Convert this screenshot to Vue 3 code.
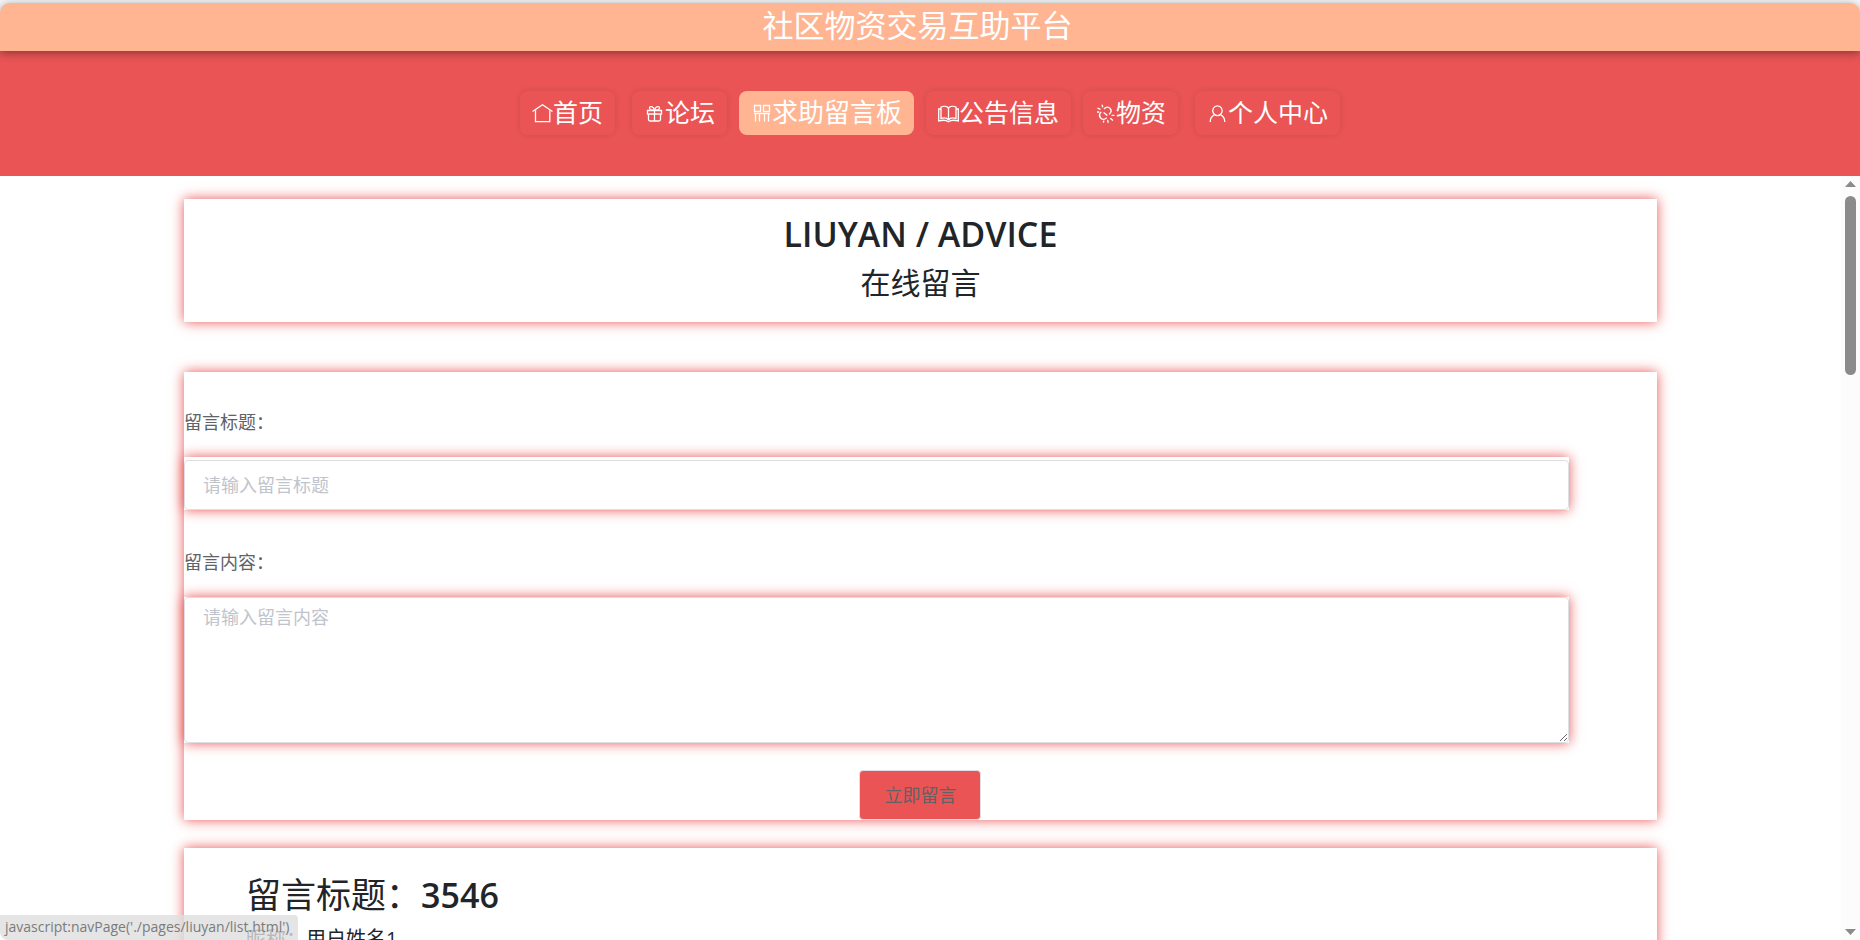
<script setup>
import { ref } from 'vue'

const navItems = [
  { label: '首页', icon: 'home' },
  { label: '论坛', icon: 'gift' },
  { label: '求助留言板', icon: 'board', active: true },
  { label: '公告信息', icon: 'book' },
  { label: '物资', icon: 'link' },
  { label: '个人中心', icon: 'user' },
]

const icons = {
  home: ['M0.5 8.5 L10.5 1.8 L20.5 8.5', 'M3.5 7.2 V18.7 H17.8 V7.2'],
  gift: [
    'M3.5 7.5 H17.5 V11 H3.5 Z',
    'M4.5 11 V16.5 Q4.5 18 6 18 H15 Q16.5 18 16.5 16.5 V11',
    'M10.5 7.5 V18',
    'M10.5 7.3 C8.5 7.3 5.5 6.8 5.5 5 C5.5 2.8 9.5 2.8 10.5 7.3 C11.5 2.8 15.5 2.8 15.5 5 C15.5 6.8 12.5 7.3 10.5 7.3',
  ],
  board: [
    'M3.5 2.5 H9.5 V8.5 H3.5 Z',
    'M12.5 2.5 H18.5 V8.5 H12.5 Z',
    'M3 10.5 H19',
    'M4.5 10.5 V18.5 M8.5 10.5 V18.5 M13.5 10.5 V18.5 M17.5 10.5 V18.5',
  ],
  book: [
    'M10.5 5 C9 3.2 5.5 3 3 4 V15.5 C5.5 14.7 9 15 10.5 16.7 C12 15 15.5 14.7 18 15.5 V4 C15.5 3 12 3.2 10.5 5 Z',
    'M10.5 5 V16.7',
    'M3 6 H0.7 V18 C4 17 8 17 10.5 18.7 C13 17 17 17 20.3 18 V6 H18',
  ],
  link: [
    'M9 6 L10.4 4.8 C13.4 2.8 17.6 6.4 15.6 9.6 L14 11.4',
    'M6.2 8.8 L5.2 10 C2.8 13.6 7 17.8 10.4 15.8 L11.8 14.7',
    'M8.6 9.4 L12.4 12.6',
    'M7 1.8 L7.8 4.4 M2.5 5.2 L5.5 6.4 M2 9 L4.2 9 M16.5 12.3 L19.5 12.4 M15.3 15.2 L18 17.6 M12.6 16.8 L13.2 19.8 M8.8 17.6 L8.4 19.6',
  ],
  user: [
    'M10.5 2.8 A4.7 4.9 0 1 1 10.4 2.8 Z',
    'M3.2 19 C3.2 15.8 4.8 13 7.5 11.6',
    'M13.5 11.6 C16.2 13 17.8 15.8 17.8 19',
  ],
}

const title = ref('')
const content = ref('')
const messages = [{ title: '3546', name: '用户姓名1' }]
</script>

<template>
  <div class="page">
    <header class="brand">
      <h1>社区物资交易互助平台</h1>
    </header>
    <nav class="nav">
      <ul>
        <li v-for="item in navItems" :key="item.label">
          <a href="#" :class="{ active: item.active }">
            <svg viewBox="0 0 21 21" aria-hidden="true">
              <path v-for="d in icons[item.icon]" :key="d" :d="d" />
            </svg>
            <span>{{ item.label }}</span>
          </a>
        </li>
      </ul>
    </nav>
    <div class="viewport">
      <main>
        <section class="card heading">
          <h2>LIUYAN / ADVICE</h2>
          <h3>在线留言</h3>
        </section>

        <form class="card form" @submit.prevent>
          <label for="title">留言标题：</label>
          <div class="field single">
            <input id="title" v-model="title" type="text" placeholder="请输入留言标题" />
          </div>
          <label for="content">留言内容：</label>
          <div class="field">
            <textarea id="content" v-model="content" placeholder="请输入留言内容"></textarea>
          </div>
          <button type="submit">立即留言</button>
        </form>

        <article v-for="m in messages" :key="m.title" class="card message">
          <h2>留言标题：<span>{{ m.title }}</span></h2>
          <p>昵称：<span>{{ m.name }}</span></p>
        </article>
      </main>
      <div class="rail" aria-hidden="true">
        <svg class="arrow" viewBox="0 0 11 6"><path d="M5.5 0 L11 6 H0 Z" /></svg>
        <div class="track"><div class="thumb"></div></div>
        <svg class="arrow" viewBox="0 0 11 6"><path d="M0 0 H11 L5.5 6 Z" /></svg>
      </div>
    </div>
    <div class="status">javascript:navPage('./pages/liuyan/list.html')</div>
  </div>
</template>

<style>
body {
  margin: 0;
  overflow: hidden;
}
</style>

<style scoped>
.page {
  position: relative;
  box-sizing: border-box;
  height: 100vh;
  padding-top: 3px;
  display: flex;
  flex-direction: column;
  overflow: hidden;
  background: linear-gradient(#f5f6f7 0 12px, #fff 12px);
  color: #212529;
  font-family: "Open Sans", "Noto Sans CJK SC", sans-serif;
}
h1, h2, h3, p, ul {
  margin: 0;
  padding: 0;
  font-weight: 400;
}
.brand {
  position: relative;
  z-index: 1;
  flex: none;
  box-sizing: border-box;
  height: 48px;
  padding-right: 25px;
  border-radius: 10px 10px 0 0;
  background: #ffb592;
  box-shadow: 0 2px 10px rgba(0, 0, 0, 0.4);
  text-align: center;
}
.brand h1 {
  color: #fff;
  font-size: 31px;
  line-height: 45px;
}
.nav {
  flex: none;
  box-sizing: border-box;
  height: 125px;
  padding-bottom: 1px;
  display: flex;
  align-items: center;
  justify-content: center;
  background: #ea5455;
}
.nav ul {
  display: flex;
  gap: 12px;
  list-style: none;
}
.nav li:first-child {
  margin-right: 5px;
}
.nav li:last-child {
  margin-left: 5px;
}
.nav a {
  display: flex;
  align-items: center;
  height: 44px;
  padding: 0 12px;
  border-radius: 8px;
  box-shadow: 0 0 6px rgba(0, 0, 0, 0.1);
  color: #fff;
  font-size: 25px;
  line-height: 40px;
  text-decoration: none;
}
.nav a.active {
  background: #ffb592;
  box-shadow: none;
  font-size: 26px;
}
.nav span {
  padding-bottom: 3px;
}
.nav svg {
  width: 21px;
  height: 21px;
  fill: none;
  stroke: #fff;
  stroke-width: 1.3;
}
.viewport {
  flex: 1;
  min-height: 0;
  display: flex;
}
main {
  flex: 1;
  overflow: hidden;
  padding-top: 23px;
}
.card {
  box-sizing: border-box;
  width: 80%;
  margin: 0 auto;
  background: #fff;
  box-shadow: 0 0 12px #ea5455;
}
.heading {
  height: 123px;
  padding-top: 10px;
  text-align: center;
}
.heading h2 {
  font-size: 34px;
  font-weight: 600;
  line-height: 50px;
}
.heading h3 {
  font-size: 30px;
  line-height: 48px;
}
.form {
  margin-top: 50px;
  padding-top: 16px;
  display: flex;
  flex-direction: column;
}
.form label {
  color: #606266;
  font-size: 18px;
  line-height: 69px;
}
.field {
  width: 94%;
  background: #fff;
  box-shadow: 0 0 12px #ea5455;
}
.field.single {
  padding-top: 3px;
  margin-bottom: 18px;
}
.field input,
.field textarea {
  display: block;
  box-sizing: border-box;
  width: 100%;
  height: 50px;
  margin: 0;
  padding: 0 18px;
  border: 1px solid #dcdfe6;
  border-radius: 4px;
  outline: none;
  background: #fff;
  color: #606266;
  font: 18px/26px "Open Sans", "Noto Sans CJK SC", sans-serif;
}
.field textarea {
  height: 146px;
  padding: 6px 18px;
  resize: vertical;
}
.field ::placeholder {
  color: #c0c4cc;
}
.form button {
  align-self: center;
  height: 50px;
  margin-top: 27px;
  padding: 0 24px;
  border: 1px solid #dcdfe6;
  border-radius: 4px;
  background: #ea5455;
  color: #606266;
  font: 18px/46px "Open Sans", "Noto Sans CJK SC", sans-serif;
}
.message {
  margin-top: 28px;
  padding: 22px 62px;
}
.message h2 {
  font-size: 35px;
  line-height: 50px;
}
.message h2 span {
  font-size: 34px;
  font-weight: 600;
}
.message p {
  font-size: 20px;
  line-height: 38px;
}
.rail {
  flex: none;
  box-sizing: border-box;
  width: 19px;
  padding: 5px 0;
  display: flex;
  flex-direction: column;
  align-items: center;
  gap: 9px;
  background: #fcfcfc;
}
.arrow {
  width: 11px;
  height: 6px;
  fill: #8b8b8b;
}
.track {
  flex: 1;
}
.thumb {
  width: 11px;
  height: 179px;
  border-radius: 6px;
  background: #8b8b8b;
}
.status {
  position: absolute;
  left: 0;
  bottom: 0;
  height: 25px;
  padding: 0 9px 0 5px;
  border-radius: 0 4px 0 8px;
  background: rgba(222, 222, 222, 0.8);
  color: #7b7b7b;
  font-size: 14px;
  line-height: 24px;
}
</style>
